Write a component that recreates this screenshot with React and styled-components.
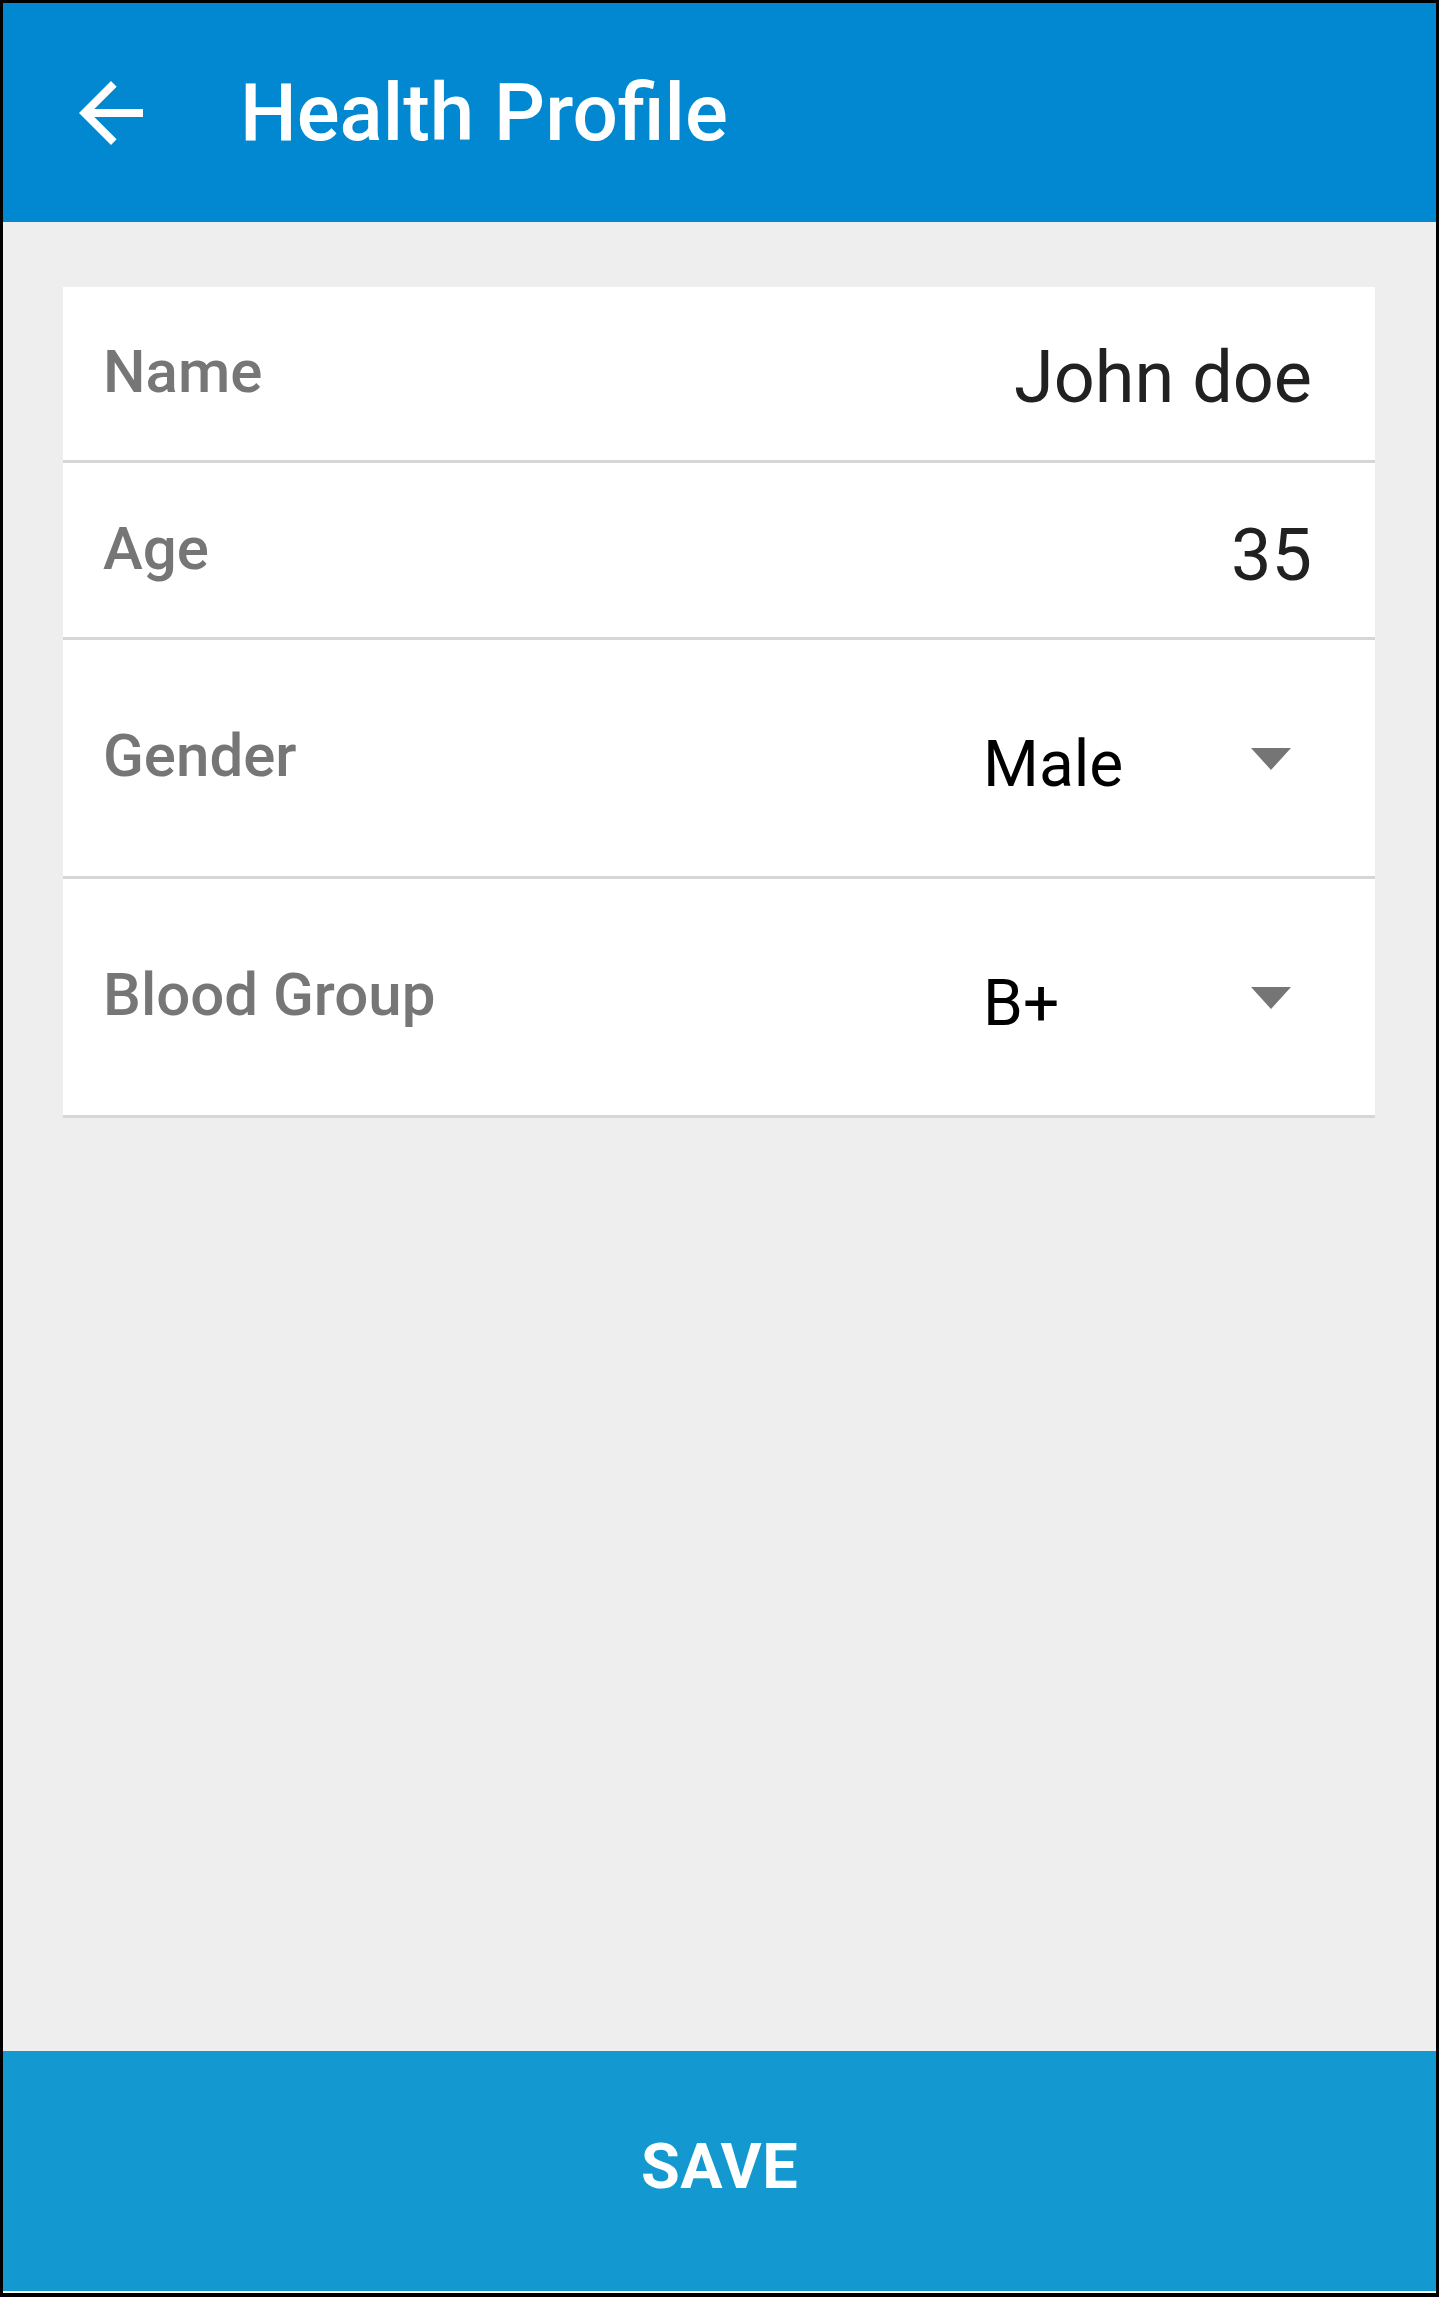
import React from "react";
import styled, { createGlobalStyle } from "styled-components";

const Global = createGlobalStyle`
  html, body { margin: 0; padding: 0; background: #000; }
  body { font-family: Roboto, "Noto Sans", Arial, sans-serif; }
  * { box-sizing: border-box; }
`;

const Screen = styled.div`
  width: 1439px;
  height: 2297px;
  border-style: solid;
  border-color: #000;
  border-width: 3px 3px 4px 3px;
  background: #fff;
  padding-bottom: 2px;
  display: flex;
  flex-direction: column;
`;

const Toolbar = styled.header`
  height: 219px;
  flex: 0 0 auto;
  background: #0288d1;
  display: flex;
  align-items: center;
  padding-left: 60px;
  gap: 81px;
`;

const BackButton = styled.button`
  width: 96px;
  height: 96px;
  padding: 0;
  border: 0;
  background: transparent;
  display: flex;
  align-items: center;
  justify-content: center;
  color: #fff;
  cursor: pointer;
`;

const Title = styled.h1`
  margin: 0;
  font-family: Roboto, Arial, sans-serif;
  font-weight: 500;
  font-size: 80px;
  line-height: 1;
  color: #fff;
`;

const Main = styled.main`
  flex: 1 1 auto;
  background: #eeeeee;
  padding: 65px 61px 0 60px;
`;

const Card = styled.section`
  background: #fff;
  display: flex;
  flex-direction: column;
`;

const Row = styled.div`
  height: ${(p) => p.$h}px;
  padding: ${(p) => p.$pad}px 63px 0 40px;
  border-bottom: 3px solid #d6d6d6;
  display: flex;
  align-items: flex-start;
  justify-content: space-between;
`;

const Label = styled.span`
  font-family: Roboto, Arial, sans-serif;
  font-weight: 500;
  font-size: 60px;
  line-height: 1;
  color: #767676;
`;

const Value = styled.span`
  font-family: Roboto, Arial, sans-serif;
  font-weight: 400;
  font-size: 72px;
  line-height: 1;
  color: #212121;
  margin-top: ${(p) => p.$dy || 0}px;
  text-align: right;
`;

const Spinner = styled.div`
  width: 308px;
  margin-right: 21px;
  padding-top: 7px;
  display: flex;
  align-items: flex-start;
  justify-content: space-between;
`;

const SpinnerText = styled.span`
  font-family: Roboto, Arial, sans-serif;
  font-weight: 400;
  font-size: 64px;
  line-height: 1;
  color: #000;
`;

const Caret = styled.svg`
  width: 40px;
  height: 22px;
  margin-top: 15px;
  display: block;
`;

const SaveButton = styled.button`
  flex: 0 0 auto;
  height: 240px;
  width: 100%;
  border: 0;
  background: #1398cf;
  color: #fff;
  font-family: Roboto, Arial, sans-serif;
  font-weight: 700;
  font-size: 63px;
  line-height: 1;
  padding: 0 0 9px 0;
  letter-spacing: 0.5px;
  cursor: pointer;
`;

const ArrowBack = () => (
  <svg width="96" height="96" viewBox="0 0 24 24" fill="#fff">
    <path d="M20 11H7.83l5.59-5.59L12 4l-8 8 8 8 1.41-1.41L7.83 13H20v-2z" />
  </svg>
);

const Dropdown = ({ value }) => (
  <Spinner>
    <SpinnerText>{value}</SpinnerText>
    <Caret viewBox="0 0 40 22">
      <polygon points="0,0 40,0 20,22" fill="#757575" />
    </Caret>
  </Spinner>
);

export default function App() {
  return (
    <>
      <Global />
      <Screen>
        <Toolbar>
          <BackButton aria-label="Back">
            <ArrowBack />
          </BackButton>
          <Title>Health Profile</Title>
        </Toolbar>
        <Main>
          <Card>
            <Row $h={176} $pad={55}>
              <Label>Name</Label>
              <Value>John doe</Value>
            </Row>
            <Row $h={177} $pad={56}>
              <Label>Age</Label>
              <Value $dy={1}>35</Value>
            </Row>
            <Row $h={239} $pad={86}>
              <Label>Gender</Label>
              <Dropdown value="Male" />
            </Row>
            <Row $h={239} $pad={86}>
              <Label>Blood Group</Label>
              <Dropdown value="B+" />
            </Row>
          </Card>
        </Main>
        <SaveButton>SAVE</SaveButton>
      </Screen>
    </>
  );
}
